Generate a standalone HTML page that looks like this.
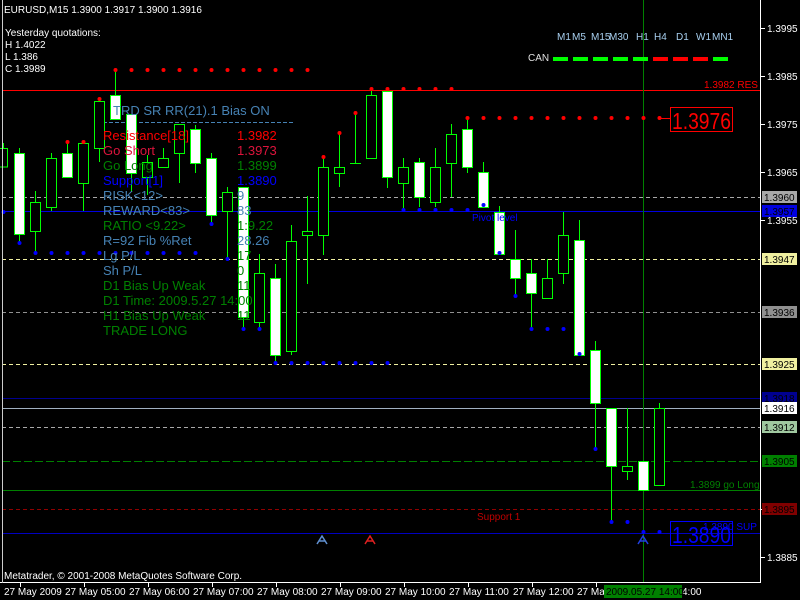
<!DOCTYPE html>
<html><head><meta charset="utf-8"><style>
html,body{margin:0;padding:0;background:#000;width:800px;height:600px;overflow:hidden}
svg{display:block}
text{font-family:"Liberation Sans",sans-serif}
</style></head><body>
<svg width="800" height="600" xmlns="http://www.w3.org/2000/svg">
<rect width="800" height="600" fill="#000"/>
<g stroke-width="1" shape-rendering="crispEdges">
<line x1="2" y1="90.5" x2="760" y2="90.5" stroke="#f00"/>
<line x1="2" y1="197.5" x2="760" y2="197.5" stroke="#a8a8a8" stroke-dasharray="4,3"/>
<line x1="2" y1="211.5" x2="760" y2="211.5" stroke="#0000e0"/>
<line x1="2" y1="259.5" x2="760" y2="259.5" stroke="#f0f0a0" stroke-dasharray="4,3"/>
<line x1="2" y1="312.5" x2="760" y2="312.5" stroke="#909090" stroke-dasharray="4,3"/>
<line x1="2" y1="364.5" x2="760" y2="364.5" stroke="#f0f0a0" stroke-dasharray="4,3"/>
<line x1="2" y1="398.5" x2="760" y2="398.5" stroke="#000090"/>
<line x1="2" y1="408.5" x2="760" y2="408.5" stroke="#a0b0c0"/>
<line x1="2" y1="427.5" x2="760" y2="427.5" stroke="#a8a8a8" stroke-dasharray="4,3"/>
<line x1="2" y1="461.5" x2="760" y2="461.5" stroke="#008000" stroke-dasharray="8,3"/>
<line x1="2" y1="490.5" x2="760" y2="490.5" stroke="#008000"/>
<line x1="2" y1="509.5" x2="760" y2="509.5" stroke="#900000" stroke-dasharray="4,3"/>
<line x1="2" y1="533.5" x2="760" y2="533.5" stroke="#0000c0"/>
<line x1="643.5" y1="0" x2="643.5" y2="582" stroke="#008000"/>
<line x1="103" y1="122.5" x2="293" y2="122.5" stroke="#4682b4" stroke-dasharray="4,2"/>
</g>
<g stroke="#00ff00" stroke-width="1" shape-rendering="crispEdges">
<line x1="3.5" y1="143" x2="3.5" y2="167"/><rect x="-2.5" y="148.5" width="10" height="18.5" fill="#000"/>
<line x1="19.5" y1="148" x2="19.5" y2="243"/><rect x="14.5" y="153.5" width="10" height="81" fill="#fff"/>
<line x1="35.5" y1="191" x2="35.5" y2="252"/><rect x="30.5" y="202.5" width="10" height="29" fill="#000"/>
<line x1="51.5" y1="153" x2="51.5" y2="211"/><rect x="46.5" y="158.5" width="10" height="49" fill="#000"/>
<line x1="67.5" y1="142" x2="67.5" y2="177"/><rect x="62.5" y="153.5" width="10" height="24" fill="#fff"/>
<line x1="83.5" y1="142" x2="83.5" y2="211"/><rect x="78.5" y="143.5" width="10" height="40" fill="#000"/>
<line x1="99.5" y1="99" x2="99.5" y2="162"/><rect x="94.5" y="101.5" width="10" height="47" fill="#000"/>
<line x1="115.5" y1="70" x2="115.5" y2="119"/><rect x="110.5" y="95.5" width="10" height="24" fill="#fff"/>
<line x1="131.5" y1="114" x2="131.5" y2="192"/><rect x="126.5" y="114.5" width="10" height="59" fill="#fff"/>
<line x1="147.5" y1="155" x2="147.5" y2="195"/><rect x="142.5" y="162.5" width="10" height="15" fill="#000"/>
<line x1="163.5" y1="148" x2="163.5" y2="168"/><rect x="158.5" y="158.5" width="10" height="9" fill="#000"/>
<line x1="179.5" y1="124" x2="179.5" y2="183"/><rect x="174.5" y="124.5" width="10" height="29" fill="#000"/>
<line x1="195.5" y1="125" x2="195.5" y2="173"/><rect x="190.5" y="129.5" width="10" height="34" fill="#fff"/>
<line x1="211.5" y1="153" x2="211.5" y2="224"/><rect x="206.5" y="158.5" width="10" height="57" fill="#fff"/>
<line x1="227.5" y1="187" x2="227.5" y2="259"/><rect x="222.5" y="192.5" width="10" height="19" fill="#000"/>
<line x1="243.5" y1="187" x2="243.5" y2="328"/><rect x="238.5" y="187.5" width="10" height="130" fill="#fff"/>
<line x1="259.5" y1="254" x2="259.5" y2="329"/><rect x="254.5" y="273.5" width="10" height="49" fill="#000"/>
<line x1="275.5" y1="264" x2="275.5" y2="363"/><rect x="270.5" y="278.5" width="10" height="77" fill="#fff"/>
<line x1="291.5" y1="225" x2="291.5" y2="355"/><rect x="286.5" y="241.5" width="10" height="110" fill="#000"/>
<line x1="307.5" y1="196" x2="307.5" y2="284"/><rect x="302.5" y="231.5" width="10" height="4" fill="#000"/>
<line x1="323.5" y1="157" x2="323.5" y2="255"/><rect x="318.5" y="167.5" width="10" height="68" fill="#000"/>
<line x1="339.5" y1="133" x2="339.5" y2="187"/><rect x="334.5" y="167.5" width="10" height="6" fill="#000"/>
<line x1="355.5" y1="113" x2="355.5" y2="163"/><line x1="350" y1="163.5" x2="361" y2="163.5"/>
<line x1="371.5" y1="89" x2="371.5" y2="158"/><rect x="366.5" y="95.5" width="10" height="63" fill="#000"/>
<line x1="387.5" y1="88" x2="387.5" y2="188"/><rect x="382.5" y="91.5" width="10" height="86" fill="#fff"/>
<line x1="403.5" y1="158" x2="403.5" y2="210"/><rect x="398.5" y="167.5" width="10" height="16" fill="#000"/>
<line x1="419.5" y1="158" x2="419.5" y2="207"/><rect x="414.5" y="162.5" width="10" height="35" fill="#fff"/>
<line x1="435.5" y1="148" x2="435.5" y2="207"/><rect x="430.5" y="167.5" width="10" height="35" fill="#000"/>
<line x1="451.5" y1="124" x2="451.5" y2="197"/><rect x="446.5" y="134.5" width="10" height="29" fill="#000"/>
<line x1="467.5" y1="119" x2="467.5" y2="173"/><rect x="462.5" y="129.5" width="10" height="38" fill="#fff"/>
<line x1="483.5" y1="162" x2="483.5" y2="207"/><rect x="478.5" y="172.5" width="10" height="35" fill="#fff"/>
<line x1="499.5" y1="206" x2="499.5" y2="254"/><rect x="494.5" y="212.5" width="10" height="42" fill="#fff"/>
<line x1="515.5" y1="230" x2="515.5" y2="296"/><rect x="510.5" y="259.5" width="10" height="19" fill="#fff"/>
<line x1="531.5" y1="259" x2="531.5" y2="329"/><rect x="526.5" y="273.5" width="10" height="20" fill="#fff"/>
<line x1="547.5" y1="259" x2="547.5" y2="298"/><rect x="542.5" y="278.5" width="10" height="20" fill="#000"/>
<line x1="563.5" y1="212" x2="563.5" y2="284"/><rect x="558.5" y="235.5" width="10" height="38" fill="#000"/>
<line x1="579.5" y1="220" x2="579.5" y2="355"/><rect x="574.5" y="240.5" width="10" height="115" fill="#fff"/>
<line x1="595.5" y1="341" x2="595.5" y2="449"/><rect x="590.5" y="350.5" width="10" height="53" fill="#fff"/>
<line x1="611.5" y1="408" x2="611.5" y2="522"/><rect x="606.5" y="408.5" width="10" height="58" fill="#fff"/>
<line x1="627.5" y1="408" x2="627.5" y2="480"/><rect x="622.5" y="466.5" width="10" height="5" fill="#000"/>
<rect x="638.5" y="461.5" width="10" height="29" fill="#fff"/>
<line x1="659.5" y1="403" x2="659.5" y2="485"/><rect x="654.5" y="408.5" width="10" height="77" fill="#000"/>
</g>
<g fill="#f00">
<circle cx="115.5" cy="70" r="2"/><circle cx="131.5" cy="70" r="2"/><circle cx="147.5" cy="70" r="2"/><circle cx="163.5" cy="70" r="2"/><circle cx="179.5" cy="70" r="2"/><circle cx="195.5" cy="70" r="2"/><circle cx="211.5" cy="70" r="2"/><circle cx="227.5" cy="70" r="2"/><circle cx="243.5" cy="70" r="2"/><circle cx="259.5" cy="70" r="2"/><circle cx="275.5" cy="70" r="2"/><circle cx="291.5" cy="70" r="2"/><circle cx="307.5" cy="70" r="2"/>
<circle cx="67.5" cy="142" r="2"/><circle cx="83.5" cy="142" r="2"/><circle cx="99.5" cy="99" r="2"/>
<circle cx="323.5" cy="157" r="2"/><circle cx="339.5" cy="133" r="2"/><circle cx="355.5" cy="113" r="2"/>
<circle cx="371.5" cy="89" r="2"/><circle cx="387.5" cy="89" r="2"/><circle cx="403.5" cy="89" r="2"/><circle cx="419.5" cy="89" r="2"/><circle cx="435.5" cy="89" r="2"/><circle cx="451.5" cy="89" r="2"/>
<circle cx="467.5" cy="118" r="2"/><circle cx="483.5" cy="118" r="2"/><circle cx="499.5" cy="118" r="2"/><circle cx="515.5" cy="118" r="2"/><circle cx="531.5" cy="118" r="2"/><circle cx="547.5" cy="118" r="2"/><circle cx="563.5" cy="118" r="2"/><circle cx="579.5" cy="118" r="2"/><circle cx="595.5" cy="118" r="2"/><circle cx="611.5" cy="118" r="2"/><circle cx="627.5" cy="118" r="2"/><circle cx="643.5" cy="118" r="2"/><circle cx="659.5" cy="118" r="2"/>
</g>
<line x1="660" y1="118.5" x2="670" y2="118.5" stroke="#f00"/>
<g fill="#00f">
<circle cx="3.5" cy="212" r="2"/><circle cx="19.5" cy="243" r="2"/>
<circle cx="35.5" cy="253" r="2"/><circle cx="51.5" cy="253" r="2"/><circle cx="67.5" cy="253" r="2"/><circle cx="83.5" cy="253" r="2"/><circle cx="99.5" cy="253" r="2"/><circle cx="115.5" cy="253" r="2"/><circle cx="131.5" cy="253" r="2"/><circle cx="147.5" cy="253" r="2"/><circle cx="163.5" cy="253" r="2"/><circle cx="179.5" cy="253" r="2"/><circle cx="195.5" cy="253" r="2"/>
<circle cx="211.5" cy="224" r="2"/><circle cx="227.5" cy="259" r="2"/><circle cx="243.5" cy="329" r="2"/><circle cx="259.5" cy="329" r="2"/>
<circle cx="275.5" cy="363" r="2"/><circle cx="291.5" cy="363" r="2"/><circle cx="307.5" cy="363" r="2"/><circle cx="323.5" cy="363" r="2"/><circle cx="339.5" cy="363" r="2"/><circle cx="355.5" cy="363" r="2"/><circle cx="371.5" cy="363" r="2"/><circle cx="387.5" cy="363" r="2"/>
<circle cx="403.5" cy="210" r="2"/><circle cx="419.5" cy="210" r="2"/><circle cx="435.5" cy="210" r="2"/><circle cx="451.5" cy="210" r="2"/><circle cx="467.5" cy="210" r="2"/><circle cx="483.5" cy="205" r="2"/>
<circle cx="499.5" cy="253" r="2"/><circle cx="515.5" cy="296" r="2"/><circle cx="531.5" cy="329" r="2"/><circle cx="547.5" cy="329" r="2"/><circle cx="563.5" cy="329" r="2"/><circle cx="579.5" cy="354" r="2"/>
<circle cx="595.5" cy="449" r="2"/><circle cx="611.5" cy="522" r="2"/><circle cx="627.5" cy="522" r="2"/><circle cx="643.5" cy="532" r="2"/><circle cx="659.5" cy="532" r="2"/>
</g>
<path d="M317 544 L322 536 L327 544 M319 541 L325 541" stroke="#6090d0" fill="none" stroke-width="1.5"/>
<path d="M365 544 L370 536 L375 544 M367 541 L373 541" stroke="#e02020" fill="none" stroke-width="1.5"/>
<path d="M638 544 L643 536 L648 544 M640 541 L646 541" stroke="#2040e0" fill="none" stroke-width="1.5"/>
<g fill="#fff" font-size="10">
<text x="4" y="13">EURUSD,M15  1.3900 1.3917 1.3900 1.3916</text>
<text x="5" y="36">Yesterday quotations:</text>
<text x="5" y="48">H 1.4022</text>
<text x="5" y="60">L 1.386</text>
<text x="5" y="72">C 1.3989</text>
<text x="4" y="579">Metatrader, © 2001-2008 MetaQuotes Software Corp.</text>
</g>
<g fill="#a8d0f0" font-size="10">
<text x="557" y="40">M1</text><text x="572" y="40">M5</text><text x="591" y="40">M15</text><text x="609" y="40">M30</text><text x="636" y="40">H1</text><text x="654" y="40">H4</text><text x="676" y="40">D1</text><text x="696" y="40">W1</text><text x="712" y="40">MN1</text>
<text x="528" y="61" fill="#e0e0e0">CAN</text>
</g>
<g shape-rendering="crispEdges">
<rect x="553" y="57" width="15" height="4" fill="#00ff00"/><rect x="573" y="57" width="15" height="4" fill="#00ff00"/><rect x="593" y="57" width="15" height="4" fill="#00ff00"/><rect x="613" y="57" width="15" height="4" fill="#00ff00"/><rect x="633" y="57" width="15" height="4" fill="#00ff00"/>
<rect x="653" y="57" width="15" height="4" fill="#f00"/><rect x="673" y="57" width="15" height="4" fill="#f00"/><rect x="693" y="57" width="15" height="4" fill="#f00"/><rect x="713" y="57" width="15" height="4" fill="#00ff00"/>
</g>
<text x="704" y="88" fill="#f00" font-size="10">1.3982 RES</text>
<rect x="670.5" y="107.5" width="62" height="24" fill="#000" stroke="#f00"/>
<text x="672" y="129" fill="#f00" font-size="23" textLength="59" lengthAdjust="spacingAndGlyphs">1.3976</text>
<text x="472" y="221" fill="#0000ff" font-size="10">Pivot level</text>
<text x="477" y="520" fill="#c00000" font-size="10">Support 1</text>
<text x="690" y="488" fill="#008000" font-size="10">1.3899 go Long</text>
<text x="703" y="530" fill="#0000ff" font-size="10">1.3890 SUP</text>
<rect x="670.5" y="521.5" width="62" height="24" fill="none" stroke="#00f"/>
<text x="672" y="543" fill="#00f" font-size="23" textLength="59" lengthAdjust="spacingAndGlyphs">1.3890</text>
<g font-size="13">
<text x="113" y="115" fill="#4682b4">TRD SR RR(21).1  Bias ON</text>
<text x="103" y="140" fill="#f00">Resistance[18]</text><text x="237" y="140" fill="#f00">1.3982</text>
<text x="103" y="155" fill="#dc143c">Go Short</text><text x="237" y="155" fill="#dc143c">1.3973</text>
<text x="103" y="170" fill="#008000">Go Long</text><text x="237" y="170" fill="#008000">1.3899</text>
<text x="103" y="185" fill="#0000ff">Support[1]</text><text x="237" y="185" fill="#0000ff">1.3890</text>
<text x="103" y="200" fill="#4682b4">RISK&lt;12&gt;</text><text x="237" y="200" fill="#4682b4">9</text>
<text x="103" y="215" fill="#4682b4">REWARD&lt;83&gt;</text><text x="237" y="215" fill="#4682b4">83</text>
<text x="103" y="230" fill="#008000">RATIO &lt;9.22&gt;</text><text x="237" y="230" fill="#008000">1:9.22</text>
<text x="103" y="245" fill="#4682b4">R=92 Fib %Ret</text><text x="237" y="245" fill="#4682b4">28.26</text>
<text x="103" y="260" fill="#4682b4">Lg P/L</text><text x="237" y="260" fill="#008000">17</text>
<text x="103" y="275" fill="#4682b4">Sh P/L</text><text x="237" y="275" fill="#008000">0</text>
<text x="103" y="290" fill="#008000">D1 Bias Up Weak</text><text x="237" y="290" fill="#008000">11</text>
<text x="103" y="305" fill="#008000">D1 Time: 2009.5.27 14:00</text>
<text x="103" y="320" fill="#008000">H1 Bias Up Weak</text><text x="237" y="320" fill="#008000">11</text>
<text x="103" y="335" fill="#008000">TRADE LONG</text>
</g>
<rect x="0" y="582" width="800" height="18" fill="#000"/>
<rect x="761" y="0" width="39" height="600" fill="#000"/>
<g stroke="#fff" shape-rendering="crispEdges">
<line x1="760.5" y1="0" x2="760.5" y2="583"/>
<line x1="0" y1="582.5" x2="761" y2="582.5"/>
<line x1="2.5" y1="0" x2="2.5" y2="583" stroke="#ccc"/>
<line x1="761" y1="28.5" x2="765" y2="28.5"/><line x1="761" y1="76.5" x2="765" y2="76.5"/><line x1="761" y1="124.5" x2="765" y2="124.5"/><line x1="761" y1="172.5" x2="765" y2="172.5"/><line x1="761" y1="220.5" x2="765" y2="220.5"/><line x1="761" y1="557.5" x2="765" y2="557.5"/><line x1="761" y1="509.5" x2="765" y2="509.5"/>
<line x1="20.5" y1="583" x2="20.5" y2="587"/><line x1="84.5" y1="583" x2="84.5" y2="587"/><line x1="148.5" y1="583" x2="148.5" y2="587"/><line x1="212.5" y1="583" x2="212.5" y2="587"/><line x1="276.5" y1="583" x2="276.5" y2="587"/><line x1="340.5" y1="583" x2="340.5" y2="587"/><line x1="404.5" y1="583" x2="404.5" y2="587"/><line x1="468.5" y1="583" x2="468.5" y2="587"/><line x1="532.5" y1="583" x2="532.5" y2="587"/><line x1="596.5" y1="583" x2="596.5" y2="587"/>
</g>
<g fill="#fff" font-size="10">
<text x="767" y="32">1.3995</text><text x="767" y="80">1.3985</text><text x="767" y="128">1.3975</text><text x="767" y="176">1.3965</text><text x="767" y="224">1.3955</text><text x="767" y="561">1.3885</text>
</g>
<g font-size="10" shape-rendering="crispEdges">
<rect x="762" y="191" width="35" height="12" fill="#a8a8a8"/><text x="764" y="201" fill="#000">1.3960</text>
<rect x="762" y="205" width="35" height="12" fill="#0000e0"/><text x="764" y="215" fill="#000">1.3957</text>
<rect x="762" y="253" width="35" height="12" fill="#f0f0a0"/><text x="764" y="263" fill="#000">1.3947</text>
<rect x="762" y="306" width="35" height="12" fill="#909090"/><text x="764" y="316" fill="#000">1.3936</text>
<rect x="762" y="358" width="35" height="12" fill="#f0f0a0"/><text x="764" y="368" fill="#000">1.3925</text>
<rect x="762" y="392" width="35" height="12" fill="#000090"/><text x="764" y="402" fill="#000">1.3918</text>
<rect x="762" y="402" width="35" height="12" fill="#fff"/><text x="764" y="412" fill="#000">1.3916</text>
<rect x="762" y="421" width="35" height="12" fill="#a0c8a0"/><text x="764" y="431" fill="#000">1.3912</text>
<rect x="762" y="455" width="35" height="12" fill="#008000"/><text x="764" y="465" fill="#000">1.3905</text>
<rect x="762" y="503" width="35" height="12" fill="#800000"/><text x="764" y="513" fill="#000">1.3895</text>
</g>
<g fill="#fff" font-size="10">
<text x="4" y="595">27 May 2009</text>
<text x="65" y="595">27 May 05:00</text>
<text x="129" y="595">27 May 06:00</text>
<text x="193" y="595">27 May 07:00</text>
<text x="257" y="595">27 May 08:00</text>
<text x="321" y="595">27 May 09:00</text>
<text x="385" y="595">27 May 10:00</text>
<text x="449" y="595">27 May 11:00</text>
<text x="513" y="595">27 May 12:00</text>
<text x="577" y="595">27 Ma</text>
<text x="682" y="595">4:00</text>
</g>
<rect x="604" y="585" width="78" height="13" fill="#008000"/>
<text x="606" y="595" fill="#000" font-size="10">2009.05.27  14:00</text>
</svg>
</body></html>
